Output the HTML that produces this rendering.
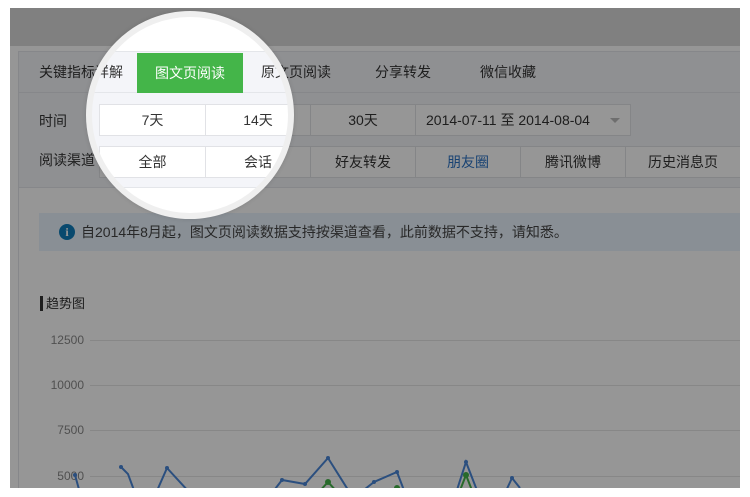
<!DOCTYPE html>
<html><head><meta charset="utf-8"><style>
*{margin:0;padding:0;box-sizing:border-box}
body{width:750px;height:497px;background:#fff;position:relative;overflow:hidden;font-family:"Liberation Sans","Noto Sans CJK SC",sans-serif;color:#333;font-size:14px}
.ui{position:absolute;left:0;top:0;width:750px;height:497px}
.frame{position:absolute;left:10px;top:8px;width:730px;height:480px;background:#fff;overflow:hidden}
.top{position:absolute;left:0;top:0;width:730px;height:38px;background:#fff}
.panel{position:absolute;left:8px;top:43px;width:730px;height:450px;border-left:1px solid #e4e6ea;border-top:1px solid #e4e6ea;background:#fff}
.tabs{position:absolute;left:0;top:0;width:730px;height:41px;background:#f4f5f9;border-bottom:1px solid #e4e6ea}
.t{position:absolute;top:0;height:41px;line-height:41px;font-size:14px}
.t.on{background:#44b549;color:#fff;text-align:center;width:106px;top:1px;height:40px;line-height:40px}
.filter{position:absolute;left:0;top:41px;width:730px;height:95px;background:#f4f5f9;border-bottom:1px solid #e4e6ea}
.lb{position:absolute;left:20px;font-size:14px}
.b{position:absolute;height:32px;line-height:30px;background:#fff;border:1px solid #e1e2e6;text-align:center;font-size:14px}
.note{position:absolute;left:20px;top:161px;width:710px;height:38px;background:#e9f3fd}
.ic{position:absolute;left:20px;top:11px;width:16px;height:16px;border-radius:50%;background:#0f7dbb;color:#fff;font:bold 12px/16px "Liberation Serif",serif;text-align:center}
.nt{position:absolute;left:42px;top:0;line-height:38px;font-size:14px;color:#444}
.ttl{position:absolute;left:21px;top:244px;font-size:13px;border-left:3px solid #333;padding-left:3px;line-height:15px}
.yl{position:absolute;width:56px;text-align:right;left:9px;font-size:12px;color:#888}
</style></head><body>

<div class="ui" id="base">
<div class="frame">
 <div class="top"></div>
 <div class="panel">
  <div class="tabs">
   <div class="t" style="left:20px">关键指标详解</div>
   <div class="t on" style="left:118px">图文页阅读</div>
   <div class="t" style="left:242px">原文页阅读</div>
   <div class="t" style="left:356px">分享转发</div>
   <div class="t" style="left:461px">微信收藏</div>
  </div>
  <div class="filter">
   <div class="lb" style="top:18px">时间</div>
   <div class="b" style="left:80px;top:11px;width:107px">7天</div>
   <div class="b" style="left:186px;top:11px;width:106px">14天</div>
   <div class="b" style="left:291px;top:11px;width:106px">30天</div>
   <div class="b" style="left:396px;top:11px;width:216px;text-align:left;padding-left:10px">2014-07-11 至 2014-08-04<span style="position:absolute;left:194px;top:13px;border:5px solid transparent;border-top:5px solid #bbb"></span></div>
   <div class="lb" style="top:57px">阅读渠道</div>
   <div class="b" style="left:80px;top:53px;width:107px">全部</div>
   <div class="b" style="left:186px;top:53px;width:106px">会话</div>
   <div class="b" style="left:291px;top:53px;width:106px">好友转发</div>
   <div class="b" style="left:396px;top:53px;width:106px;color:#2b72c4">朋友圈</div>
   <div class="b" style="left:501px;top:53px;width:106px">腾讯微博</div>
   <div class="b" style="left:606px;top:53px;width:116px">历史消息页</div>
  </div>
  <div class="note"><div class="ic">i</div><div class="nt">自2014年8月起，图文页阅读数据支持按渠道查看，此前数据不支持，请知悉。</div></div>
  <div class="ttl">趋势图</div>
  <div class="yl" style="top:281px">12500</div>
  <div class="yl" style="top:326px">10000</div>
  <div class="yl" style="top:371px">7500</div>
  <div class="yl" style="top:417px">5000</div>
 </div>
 <svg style="position:absolute;left:0;top:0" width="730" height="480">
  <g stroke="#e6e6e6" stroke-width="1">
   <line x1="80" y1="332.5" x2="730" y2="332.5"/><line x1="80" y1="377.5" x2="730" y2="377.5"/>
   <line x1="80" y1="422.5" x2="730" y2="422.5"/><line x1="80" y1="468.5" x2="730" y2="468.5"/>
  </g>
  <g fill="none" stroke="#4a86d8" stroke-width="2">
   <polyline points="65,467 70,485"/>
   <polyline points="111,459 118,466 125,485"/>
   <polyline points="146,485 157,460 180,485"/>
   <polyline points="262,485 272,472 295,476 318,450 340,485"/>
   <polyline points="350,485 364,474 387,464 395,485"/>
   <polyline points="446,485 456,454 468,485"/>
   <polyline points="495,485 502,470 510,480"/>
  </g>
  <g fill="none" stroke="#44b549" stroke-width="2">
   <polyline points="308,485 318,474 328,485"/>
   <polyline points="382,485 387,480 392,485"/>
   <polyline points="449,485 456,467 463,485"/>
  </g>
  <g fill="#4a86d8"><circle cx="65" cy="467" r="2"/><circle cx="111" cy="459" r="2"/><circle cx="157" cy="460" r="2"/><circle cx="272" cy="472" r="2"/><circle cx="295" cy="476" r="2"/><circle cx="318" cy="450" r="2"/><circle cx="364" cy="474" r="2"/><circle cx="387" cy="464" r="2"/><circle cx="456" cy="454" r="2"/><circle cx="502" cy="470" r="2"/></g>
  <g fill="#44b549"><circle cx="318" cy="474" r="3"/><circle cx="387" cy="480" r="3"/><circle cx="456" cy="467" r="3"/></g>
 </svg>
</div>
</div>

<div style="position:absolute;left:10px;top:8px;width:730px;height:480px;background:rgba(0,0,0,0.41)"></div>
<div style="position:absolute;left:10px;top:8px;width:730px;height:38px;background:#808080"></div>

<div id="lens" style="position:absolute;left:0;top:0;width:750px;height:497px;clip-path:circle(100px at 190px 115px)"></div>
<div style="position:absolute;left:86px;top:11px;width:208px;height:208px;border-radius:50%;border:6px solid #efefef;box-shadow:0 0 5px rgba(0,0,0,0.12)"></div>

<script>
var b=document.getElementById('base').cloneNode(true);b.removeAttribute('id');
document.getElementById('lens').appendChild(b);
</script>
</body></html>
